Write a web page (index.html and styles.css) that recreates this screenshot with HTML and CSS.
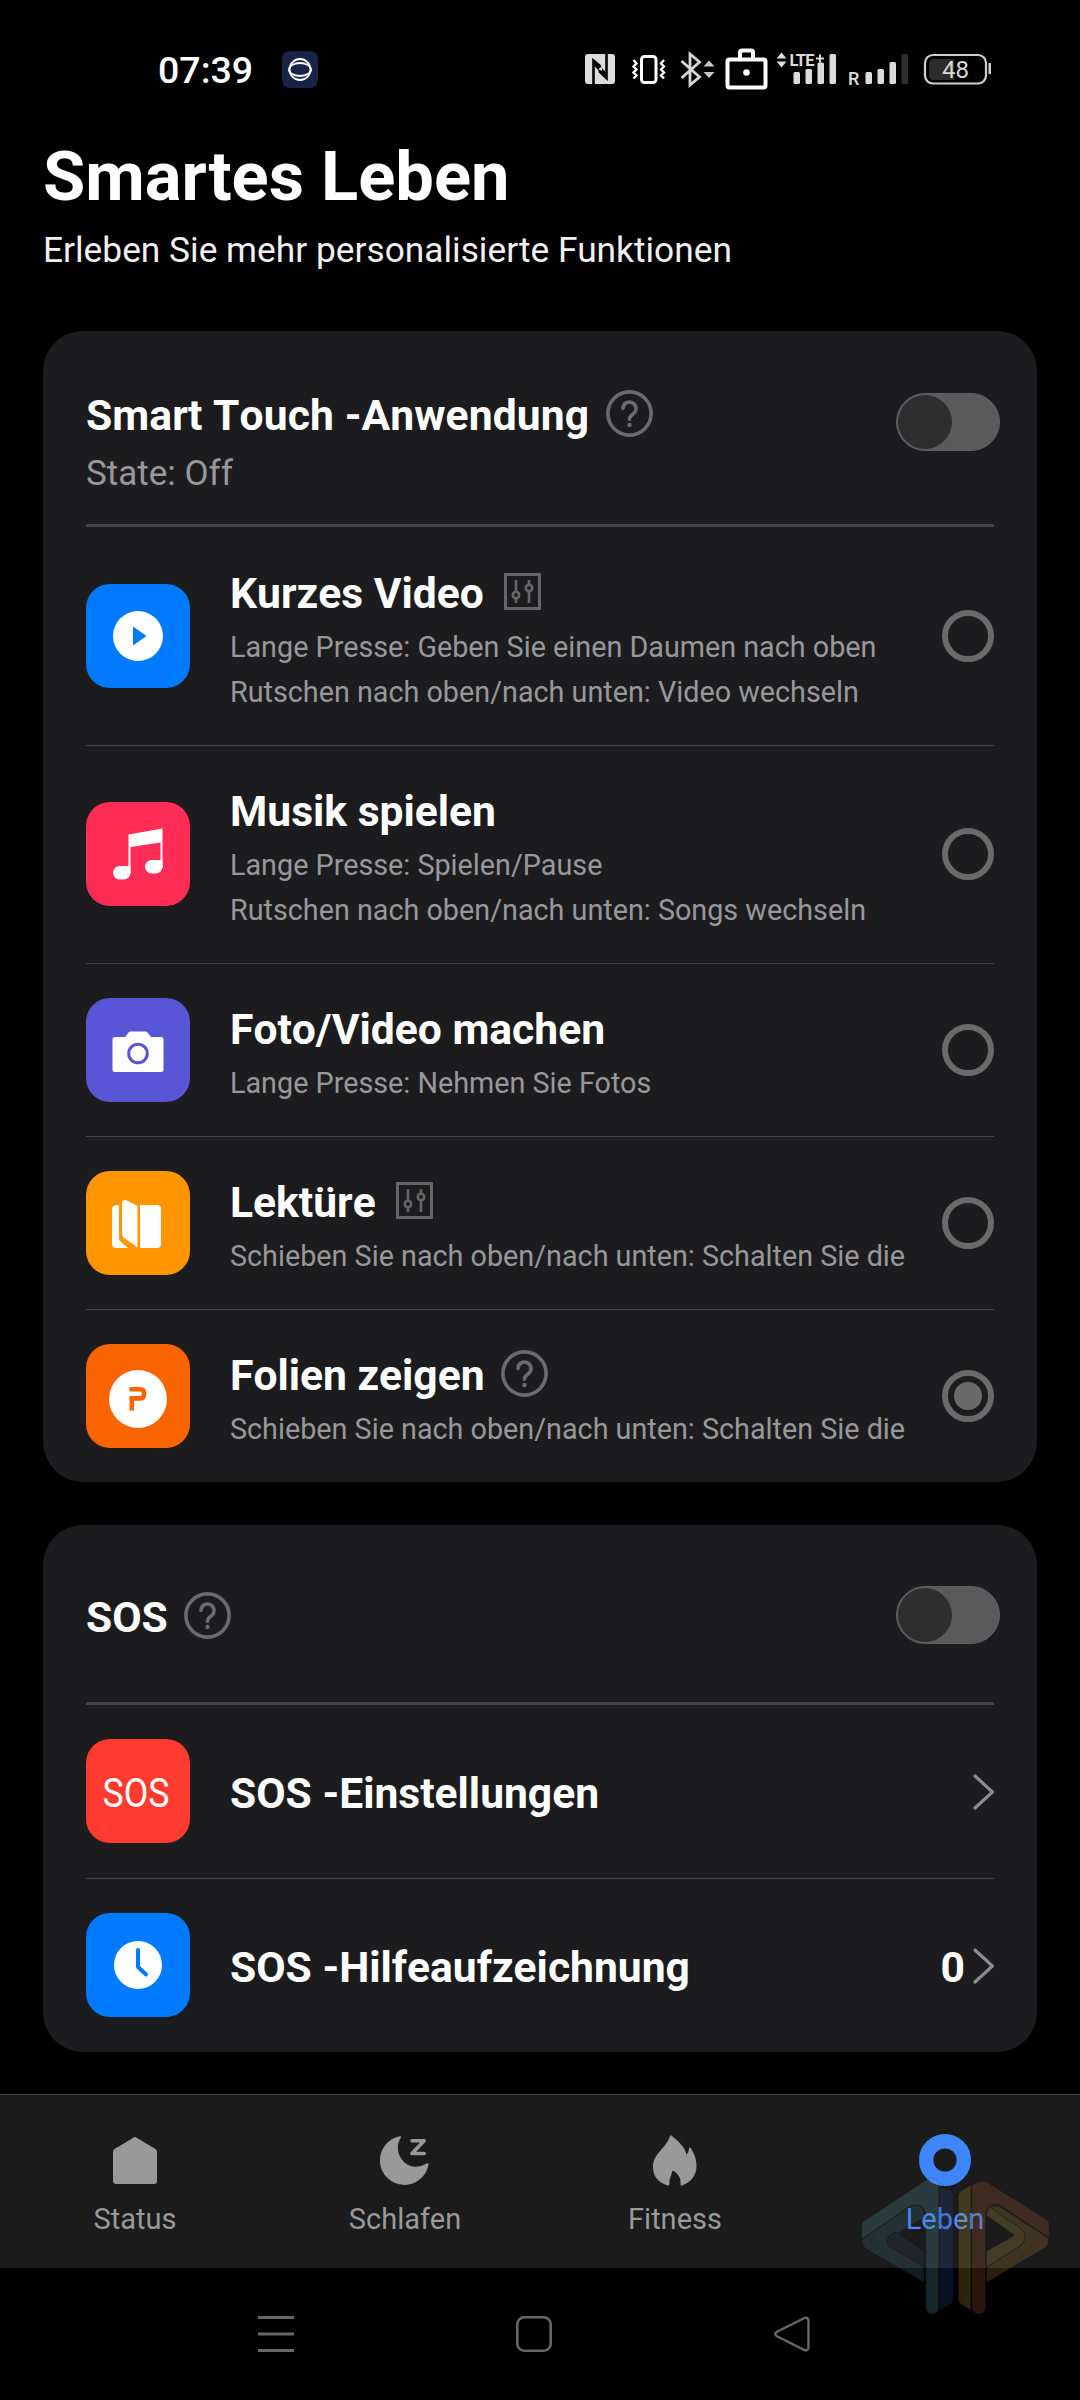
FILE: index.html
```html
<!DOCTYPE html>
<html lang="de">
<head>
<meta charset="utf-8">
<title>Smartes Leben</title>
<link rel="stylesheet" href="styles.css">
</head>
<body>
<svg class="defs" width="0" height="0" aria-hidden="true">
  <symbol id="help" viewBox="0 0 47 47"><g fill="none" stroke="#6b6b6b" stroke-width="3.600"><circle cx="23.500" cy="23.500" r="21.600"/><path d="M17 18.500a6.500 6.500 0 1 1 10 5.500c-2.400 1.600-3.500 2.200-3.500 5.200" stroke-linecap="round"/></g><circle cx="23.500" cy="35" r="2.200" fill="#6b6b6b"/></symbol>
  <symbol id="sliders" viewBox="0 0 37 37"><g fill="none" stroke="#666" stroke-width="3"><path d="M1.500 1.500h34v34h-34z"/><g stroke-width="2.600"><circle cx="12" cy="22" r="3.200"/><path d="M12 7v11.500M12 25.500V30"/><circle cx="25" cy="15" r="3.200"/><path d="M25 7v4.500M25 18.500V30"/></g></g></symbol>
  <symbol id="chevron" viewBox="0 0 22 36"><path d="M3 2l17.500 16L3 34" fill="none" stroke="#8c8c8c" stroke-width="3.200" stroke-linecap="round"/></symbol>
</svg>
<div class="screen">
  <div class="statusbar">
    <span class="time">07:39</span>
    <svg class="app-badge" viewBox="0 0 36 37"><rect width="36" height="37" rx="8" fill="#182447"/><g fill="none" stroke="#fff" stroke-width="1.800"><circle cx="18" cy="18.500" r="10.500"/><ellipse cx="18" cy="18.500" rx="11" ry="6.500"/></g></svg>
    <svg class="status-icons" viewBox="-20 0 440 50">
      <rect x="5" y="9" width="30" height="30" rx="3" fill="#dcdcdc"/>
      <path d="M13.500 39V15.500L20 21v6l6.500 6V9" fill="none" stroke="#000" stroke-width="2.600"/>
      <path d="M13.500 14l13 14v6l-13-14z" fill="#000"/><path d="M18 24l4-2v4z" fill="#dcdcdc"/>
      <g fill="none" stroke="#fff"><rect x="61.500" y="11.500" width="14.500" height="26" rx="3" stroke-width="3"/><path d="M53.500 15l3 3.500-3 3 3 3-3 3 3 3-3 3M84 15l-3 3.500 3 3-3 3 3 3-3 3 3 3" stroke-width="2.400"/></g>
      <path d="M101.500 16l18 16-9.500 8v-31l9.500 8-18 16" fill="none" stroke="#d6d6d6" stroke-width="2.800"/>
      <path d="M123.500 21.500l5.500-6 5.500 6zM123.500 27l5.500 6 5.500-6z" fill="#c8c8c8"/>
      <g fill="none" stroke="#fff" stroke-width="4"><rect x="147.500" y="14.500" width="38" height="28" rx="2"/><path d="M160 14V7.500q0-2 2-2h9q2 0 2 2V14"/></g><circle cx="166.500" cy="27.500" r="3.300" fill="#fff"/>
      <g fill="#dcdcdc"><path d="M196.500 13.500l5-6 5 6zM196.500 16.500l5 6 5-6z"/>
        <text x="209.500" y="20.500" class="lte" textLength="25">LTE</text><path d="M236 12.500h3v-3h2v3h3v2h-3v3h-2v-3h-3z"/>
        <rect x="213.500" y="27" width="6.500" height="12" rx="1.500"/><rect x="225.500" y="24" width="6.500" height="15" rx="1.500"/><rect x="237.500" y="17.500" width="6.500" height="21.500" rx="1.500"/><rect x="249.500" y="9" width="6.500" height="30" rx="1.500"/>
        <text x="268" y="40" class="roaming">R</text>
        <rect x="285.500" y="27" width="6.500" height="12" rx="1.500"/><rect x="297.500" y="24" width="6.500" height="15" rx="1.500"/><rect x="309.500" y="17" width="6.500" height="22" rx="1.500"/><rect x="321.500" y="9" width="6.500" height="30" rx="1.500" fill="#2e2e2e"/></g>
      <path d="M354 14h20v21h-20q-5 0-5-5V19q0-5 5-5z" fill="#2c2c2c"/>
      <rect x="345" y="10" width="61" height="28.500" rx="8" fill="none" stroke="#cfcfcf" stroke-width="2.200"/><rect x="408.500" y="18" width="2.500" height="11" fill="#cfcfcf"/>
      <text x="375.500" y="33" class="battery" text-anchor="middle">48</text>
    </svg>
  </div>

  <header class="page-head">
    <h1>Smartes Leben</h1>
    <p>Erleben Sie mehr personalisierte Funktionen</p>
  </header>

  <section class="card">
    <div class="card-head card-head-tall">
      <div>
        <div class="title title-wide">Smart Touch -Anwendung<svg class="help"><use href="#help"/></svg></div>
        <p class="state">State: Off</p>
      </div>
      <span class="toggle"></span>
    </div>
    <div class="row row-tall row-first">
      <svg class="tile" viewBox="0 0 104 104"><rect width="104" height="104" rx="24" fill="#007aff"/><circle cx="52" cy="52" r="25" fill="#fff"/><path d="M47 42.500v19L60.500 52z" fill="#007aff"/></svg>
      <div class="text"><div class="title">Kurzes Video<svg class="sliders"><use href="#sliders"/></svg></div>
        <p>Lange Presse: Geben Sie einen Daumen nach oben</p><p>Rutschen nach oben/nach unten: Video wechseln</p></div>
      <span class="radio"></span>
    </div>
    <div class="row row-tall">
      <svg class="tile" viewBox="0 0 104 104"><rect width="104" height="104" rx="24" fill="#ff2d55"/><g fill="#fff"><path d="M42.500 32.500L76.500 26.500V66h-2V40.500L44.500 45V71h-2z"/><rect x="27" y="64" width="17.500" height="13.500" rx="6.700"/><path d="M38 64h6.500v7H38z"/><rect x="59" y="58" width="17.500" height="13.500" rx="6.700"/><path d="M70 58h6.500v7H70z"/></g></svg>
      <div class="text"><div class="title">Musik spielen</div>
        <p>Lange Presse: Spielen/Pause</p><p>Rutschen nach oben/nach unten: Songs wechseln</p></div>
      <span class="radio"></span>
    </div>
    <div class="row">
      <svg class="tile" viewBox="0 0 104 104"><rect width="104" height="104" rx="24" fill="#5856d6"/><path fill="#fff" d="M29 39h10l3.500-4.500q.8-1 2-1h15q1.200 0 2 1L65 39h10q2.500 0 2.500 2.500v30q0 2.500-2.500 2.500H29q-2.500 0-2.500-2.500v-30Q26.500 39 29 39z"/><circle cx="52" cy="55.500" r="9.300" fill="#fff" stroke="#5856d6" stroke-width="3"/></svg>
      <div class="text"><div class="title">Foto/Video machen</div><p>Lange Presse: Nehmen Sie Fotos</p></div>
      <span class="radio"></span>
    </div>
    <div class="row">
      <svg class="tile" viewBox="0 0 104 104"><rect width="104" height="104" rx="24" fill="#ff9500"/><g fill="#fff"><path d="M33 34v33q0 2 1.500 3.500l7.500 6.500H30q-4 0-4-4V38q0-4 7-4z"/><path d="M36 33q0-6 6-3l9.500 5v41.500L37.500 66.500Q36 65 36 62.500z"/><path d="M54 34h17q4 0 4 4v35q0 4-4 4H54z"/></g></svg>
      <div class="text"><div class="title">Lektüre<svg class="sliders"><use href="#sliders"/></svg></div><p>Schieben Sie nach oben/nach unten: Schalten Sie die</p></div>
      <span class="radio"></span>
    </div>
    <div class="row row-last">
      <svg class="tile" viewBox="0 0 104 104"><rect width="104" height="104" rx="24" fill="#fa6400"/><circle cx="52" cy="55" r="29" fill="#fff"/><path d="M43.500 45.300H54q4 0 4 3.800v1.300q0 4-4 4H45.800V66.500" fill="none" stroke="#fa6400" stroke-width="4.600"/></svg>
      <div class="text"><div class="title">Folien zeigen<svg class="help"><use href="#help"/></svg></div><p>Schieben Sie nach oben/nach unten: Schalten Sie die</p></div>
      <span class="radio radio-on"></span>
    </div>
  </section>

  <section class="card">
    <div class="card-head">
      <div class="title">SOS<svg class="help"><use href="#help"/></svg></div>
      <span class="toggle"></span>
    </div>
    <div class="row row-link">
      <svg class="tile" viewBox="0 0 104 104"><rect width="104" height="104" rx="24" fill="#ff3b30"/><text x="16.500" y="67.500" class="sos" textLength="67" lengthAdjust="spacingAndGlyphs">SOS</text></svg>
      <div class="title">SOS -Einstellungen</div>
      <svg class="chevron"><use href="#chevron"/></svg>
    </div>
    <div class="row row-link">
      <svg class="tile" viewBox="0 0 104 104"><rect width="104" height="104" rx="24" fill="#007aff"/><circle cx="52" cy="52" r="24" fill="#fff"/><path d="M52 37v17l8 7.500" fill="none" stroke="#007aff" stroke-width="4" stroke-linecap="round" stroke-linejoin="round"/></svg>
      <div class="title">SOS -Hilfeaufzeichnung</div>
      <span class="count">0</span>
      <svg class="chevron"><use href="#chevron"/></svg>
    </div>
  </section>

  <nav class="tabs">
    <div class="tab"><svg viewBox="0 0 52 52"><path d="M26 3q1 0 2 1L46.500 15q1.500 1 1.500 3v29q0 3-3 3H7q-3 0-3-3V18q0-2 1.500-3L24 4q1-1 2-1z" fill="#999"/></svg>Status</div>
    <div class="tab"><svg viewBox="0 0 52 52"><path d="M20 2.500q3-.7 1.800 1.300C17 11 18 21 25 28c6 6 15 6 22 1.800q3-1.500 2.500 1A24.500 24.500 0 1 1 20 2.500z" fill="#999"/><path d="M33 6.800h12.200L33 19.500h12.200" fill="none" stroke="#999" stroke-width="3.600" stroke-linejoin="round" stroke-linecap="round"/></svg>Schlafen</div>
    <div class="tab"><svg viewBox="0 0 52 52"><path d="M21 2q1-1.500 2 0c7 6 13 11 14.500 18.500q2-1.500 2.500-6 .5-2 2 0C46 21 47.500 26 47.500 32c0 9-5 16-14.500 19.500q-2 .5-1.500-1.500c.5-6-2-9-6-12.500q-2-1.500-2.500.5C22 43 20 45 20.500 50q0 2-2 1.500C8 48 4 41 4 33 4 19 17 15 21 2z" fill="#999"/></svg>Fitness</div>
    <div class="tab tab-active"><svg viewBox="0 0 52 52"><circle cx="26" cy="26" r="18.800" fill="none" stroke="#3f86fb" stroke-width="14.400"/></svg>Leben</div>
  </nav>
  <div class="navbar">
    <svg viewBox="0 0 36 36"><path d="M0 1.500h36M0 18h36M0 34.500h36" stroke="#666" stroke-width="3"/></svg>
    <svg viewBox="0 0 36 36"><rect x="1.300" y="1.300" width="33.400" height="33.400" rx="7" fill="none" stroke="#666" stroke-width="2.600"/></svg>
    <svg viewBox="0 0 36 36"><path d="M30.500 2L3 15.800q-3.500 2.200 0 4.400L30.500 34q4 1 4-3V5q0-4-4-3z" fill="none" stroke="#666" stroke-width="2.400"/></svg>
  </div>
  <svg class="watermark" viewBox="405 270 600 450">
    <g stroke="#101418" stroke-width="2" stroke-linejoin="round">
      <path d="M425 480L565 382Q605 360 613 400v12l-78 46q-12-2-25 10-16 16 0 30l103 62v48L440 508q-16-12-15-28z" fill="#41788f"/>
      <path d="M510 466q12-12 28-4l75 52v48L510 500q-18-16 0-34z" fill="#34466f"/>
      <path d="M425 478V436q0-9 10-15L615 302q22-20 42 5V680q0 22-20 22t-20-22V400q-10-38-50-20z" fill="#5aa5ae"/>
      <path d="M657 322l30 6q13 5 13 20V655q0 12-10 18l-33 20z" fill="#2c4796"/>
      <path d="M715 348q0-11 10-17l28-16V690l-28-16q-10-6-10-16z" fill="#c59c34"/>
      <path d="M799 514l84-48-84-60q4-42 40-28l70 66q18 36-8 55L799 562z" fill="#c8a544"/>
      <path d="M799 562l102-64q26-22 6-48-5-8-70-48l-30-24 30 0L985 474q4 18-12 31L799 608z" fill="#b9833a"/>
      <path d="M755 320q14-20 42-16L978 417q10 6 10 15v42L840 376q-32-10-43 20V680q0 22-20 22t-22-22z" fill="#b5613b"/>
    </g>
  </svg>
</div>
</body>
</html>
```
FILE: styles.css
```css
* { box-sizing: border-box; margin: 0; padding: 0; }
body { background: #000; color: #fff; font-family: Roboto, sans-serif; }
.defs { position: absolute; }
.screen { position: relative; width: 1080px; height: 2400px; display: flex; flex-direction: column; overflow: hidden; }
svg { display: block; flex: none; }

.statusbar { height: 137px; display: flex; align-items: flex-start; padding: 30px 0 0 158px; }
.time { width: 124px; padding-top: 17px; font-size: 37.500px; line-height: 46px; font-weight: 500; }
.app-badge { width: 36px; height: 37px; margin-top: 21px; }
.status-icons { width: 440px; height: 50px; margin: 15px 0 0 242px; }
.lte { font-size: 16.500px; font-weight: 700; }
.roaming { font-size: 18px; font-weight: 500; }
.battery { font-size: 24px; fill: #d8d8d8; }
.sos { font-size: 40px; fill: #fff; }

.page-head { height: 194px; padding-left: 43px; }
h1 { font-size: 68.700px; line-height: 80px; font-weight: 700; }
.page-head p { font-size: 35.300px; line-height: 48px; margin-top: 9px; color: #f0f0f0; }

.card { margin: 0 43px; border-radius: 40px; background: #1c1c1e; padding: 0 43px; }
.card + .card { margin-top: 43px; }
.card-head { height: 180px; border-bottom: 3px solid #444446; display: flex; justify-content: space-between; align-items: center; }
.card-head > .title { padding-top: 6px; }
.card-head > .title .help { margin-bottom: 3px; }
.card-head > .toggle { margin-top: 2px; }
.card-head-tall { height: 196px; align-items: flex-start; padding-top: 54px; }
.card-head-tall > .toggle { margin-top: 8px; }
.title { display: flex; align-items: center; font-size: 42.600px; line-height: 60px; font-weight: 700; font-kerning: none; white-space: nowrap; }
.title-wide { letter-spacing: .1px; }
.title .help { width: 47px; height: 47px; margin: 0 0 4px 16px; }
.title-wide .help { margin-left: 17px; }
.title .sliders { width: 37px; height: 37px; margin: 0 0 4px 20px; }
.state { font-size: 35px; line-height: 48px; margin-top: 5px; color: #98989a; }
.toggle { width: 104px; height: 58px; border-radius: 29px; background: #5a5a5a; border: 1px solid #55626e; margin-right: -6px; padding: 1px; flex: none; }
.toggle::before { content: ""; display: block; width: 54px; height: 54px; border-radius: 50%; background: #2e2e2e; }

.row { display: flex; align-items: center; height: 173px; border-bottom: 1px solid #444446; }
.row-tall { height: 218px; }
.row-first { height: 219px; }
.row:last-child { border-bottom: 0; }
.row-last { height: 172px; }
.tile { width: 104px; height: 104px; margin: 0 40px 1px 0; }
.text { align-self: flex-start; padding-top: 35px; flex: 1; }
.row-first .text { padding-top: 36px; }
.text .title { margin-bottom: 2px; }
.text p { font-size: 28.750px; line-height: 45px; color: #98989a; white-space: nowrap; }
.radio { width: 52px; height: 52px; border-radius: 50%; border: 6px solid #6a6a6a; flex: none; margin-bottom: 1px; }
.radio-on { padding: 6px; }
.radio-on::before { content: ""; display: block; width: 28px; height: 28px; border-radius: 50%; background: #6a6a6a; }
.row-link { height: 174px; }
.row-link:last-child { height: 173px; }
.row-link .title { flex: 1; padding-top: 2px; }
.count { font-size: 42.600px; line-height: 60px; font-weight: 700; padding-top: 2px; margin-right: 7px; }
.chevron { width: 22px; height: 36px; }

.tabs { margin-top: auto; height: 174px; background: #1b1b1b; border-top: 1px solid #444; display: flex; }
.tab { flex: 1; display: flex; flex-direction: column; align-items: center; padding-top: 39px; font-size: 29px; line-height: 36px; color: #999; }
.tab svg { width: 52px; height: 52px; margin-bottom: 15px; }
.tab-active { color: #4a8cf5; }
.navbar { height: 132px; display: flex; gap: 222px; padding: 48px 0 0 258px; }
.navbar svg { width: 36px; height: 36px; }
.watermark { position: absolute; left: 855px; top: 2170px; width: 200px; height: 150px; opacity: .23; }
```
